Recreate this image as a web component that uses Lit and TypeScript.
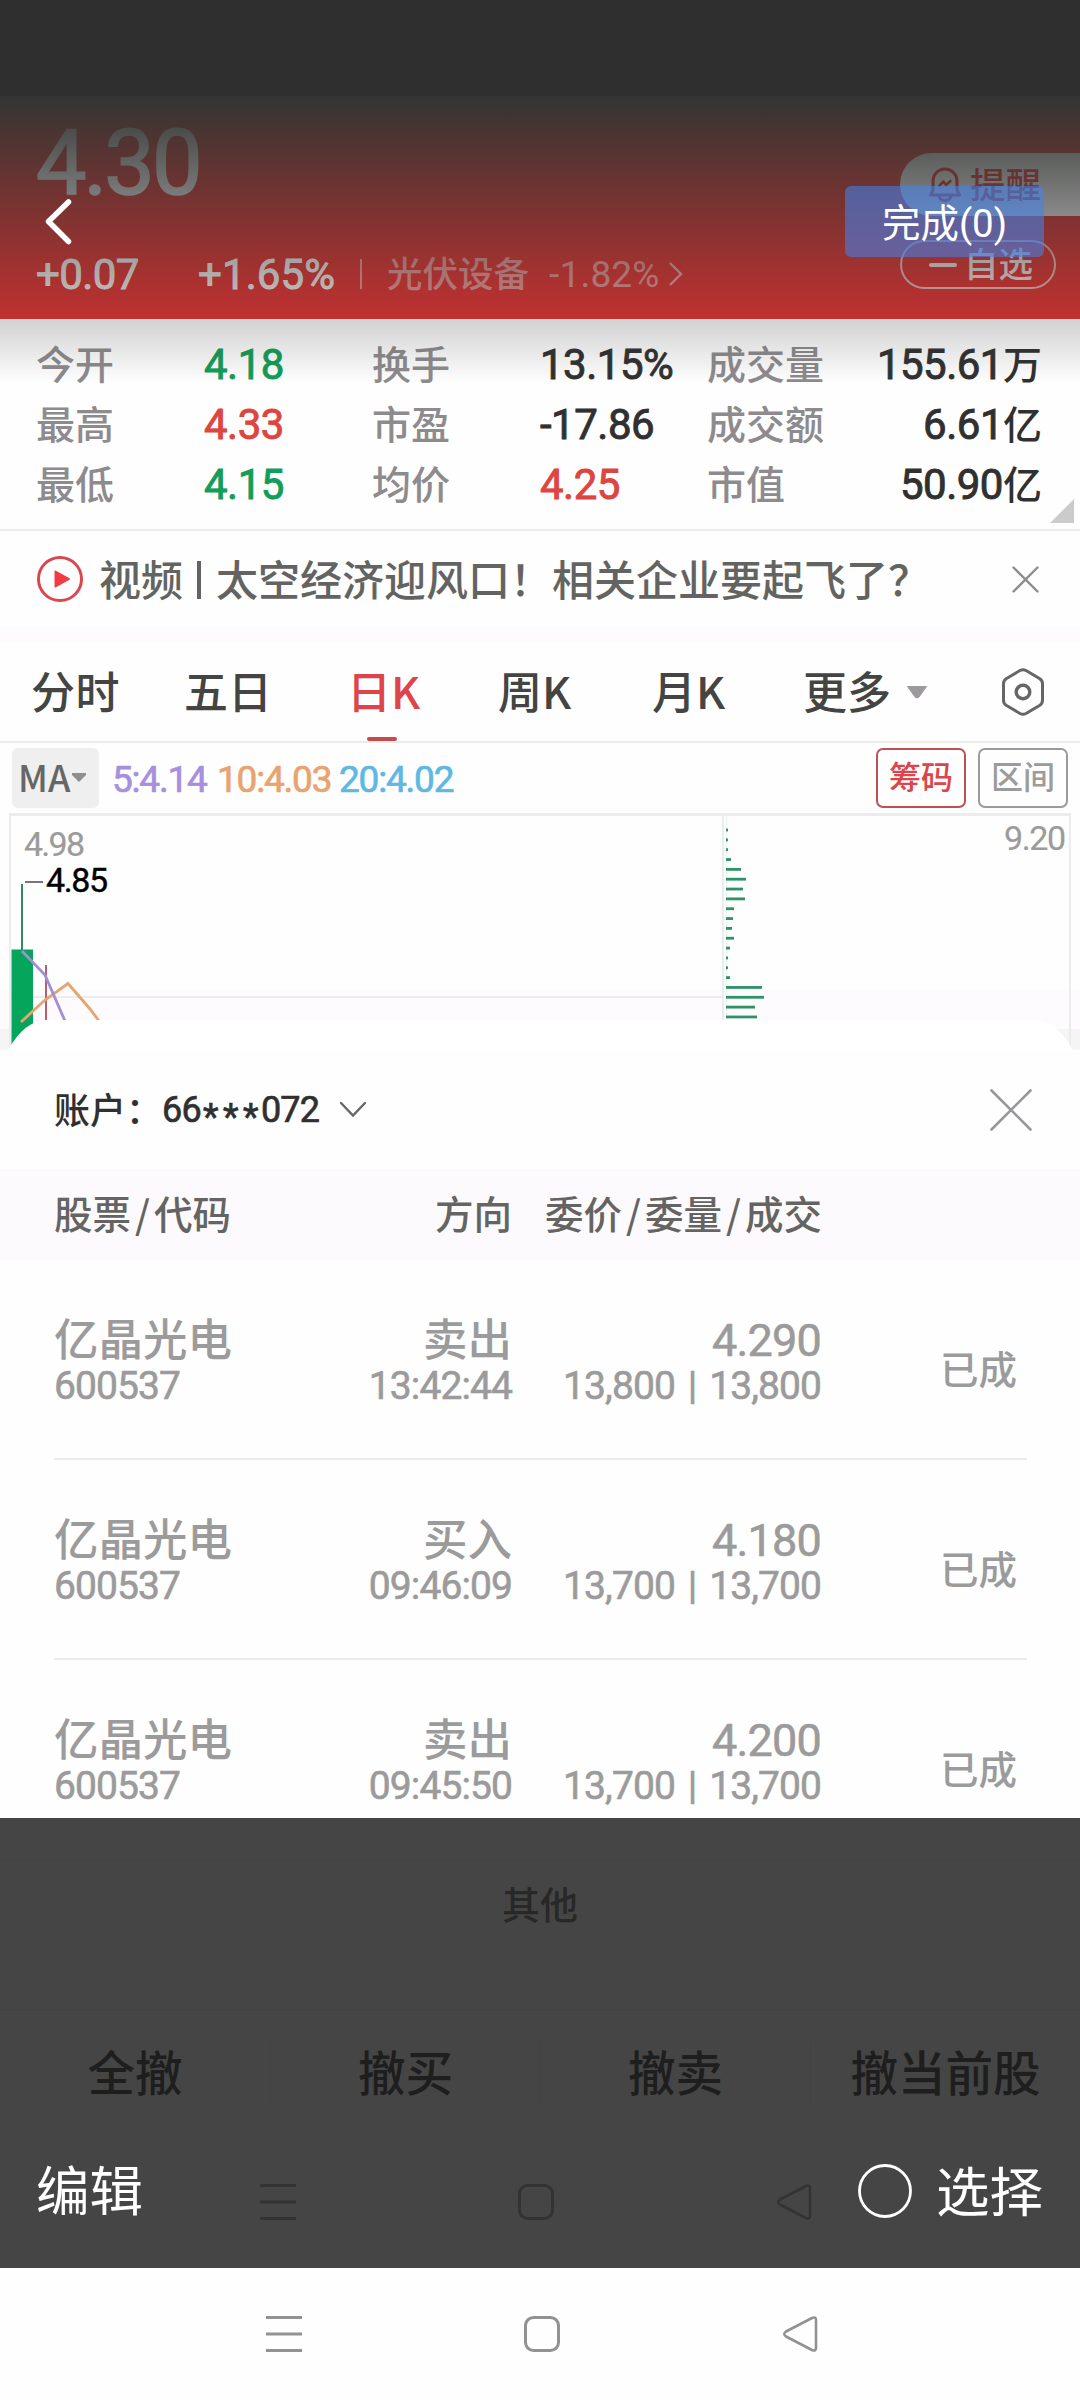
import { LitElement, html, css, svg } from "lit";
import { customElement } from "lit/decorators.js";

const quotes = [
  ["今开", "4.18", "down", "换手", "13.15%", "", "成交量", "155.61", "万"],
  ["最高", "4.33", "up", "市盈", "-17.86", "", "成交额", "6.61", "亿"],
  ["最低", "4.15", "down", "均价", "4.25", "up", "市值", "50.90", "亿"],
];

const orders = [
  ["卖出", "13:42:44", "4.290", "13,800", "13,800"],
  ["买入", "09:46:09", "4.180", "13,700", "13,700"],
  ["卖出", "09:45:50", "4.200", "13,700", "13,700"],
];

const chips = [2, 2, 2, 5, 15, 20, 17, 19, 8, 7, 6, 8, 4, 2, 2, 4, 36, 38, 29, 31];

const navIcons = (color: string) => html`
  <svg width="36" height="36" viewBox="0 0 36 36" fill="none" stroke=${color} stroke-width="3">
    <path d="M0 1.5H36M0 18H36M0 34.5H36" />
  </svg>
  <svg width="36" height="36" viewBox="0 0 36 36" fill="none" stroke=${color} stroke-width="3">
    <rect x="1.5" y="1.5" width="33" height="33" rx="8" />
  </svg>
  <svg width="36" height="36" viewBox="0 0 36 36" fill="none" stroke=${color} stroke-width="2.6" stroke-linejoin="round">
    <path d="M30 2Q34 0.5 34 4V32Q34 35.500 30 34L4 20.500Q0.500 18 4 15.500Z" />
  </svg>
`;

@customElement("quote-header")
export class QuoteHeader extends LitElement {
  static styles = css`
    :host {
      display: block;
      height: 319px;
      background: #e9302f;
      position: relative;
      font-weight: 500;
    }
    .price {
      padding: 111px 0 0 36px;
      height: 105px;
      font: 400 90px/105px Roboto, sans-serif;
      -webkit-text-stroke: 1.6px #fff;
      letter-spacing: -3px;
      color: #fff;
    }
    .line {
      display: flex;
      align-items: center;
      height: 50px;
      margin-top: 33px;
      padding-left: 36px;
      font-family: Roboto, "Noto Sans CJK SC", sans-serif;
      font-size: 42px;
      color: #fffffff2;
    }
    .chg, .pct { width: 162px; font-weight: 400; -webkit-text-stroke: 0.9px; }
    .chg { letter-spacing: -0.6px; }
    .pct { letter-spacing: 0.1px; }
    .bar { width: 2px; height: 30px; background: #ffffff80; margin-right: 25px; }
    .sector { width: 162px; font: 500 35.5px/46px "Noto Sans CJK SC", sans-serif; padding-bottom: 4px; color: #ffffff80; }
    .spct { width: 119px; font-size: 37px; color: #ffffff80; font-weight: 400; letter-spacing: 0.2px; }
    .remind {
      position: absolute;
      left: 900px;
      top: 153px;
      width: 151px;
      height: 63px;
      padding-left: 29px;
      border-radius: 32px 0 0 32px;
      background: #fff;
      color: #e9302f;
      display: flex;
      align-items: center;
      gap: 9px;
      font-size: 35.5px;
      line-height: 59px;
    }
    .remind span { padding-bottom: 4px; }
    .fav {
      position: absolute;
      left: 900px;
      top: 240px;
      width: 125px;
      height: 45px;
      padding-left: 27px;
      border: 2px solid #ffffffb0;
      border-radius: 25px;
      color: #ffffffe8;
      display: flex;
      align-items: center;
      gap: 7px;
      font-size: 34.5px;
      line-height: 41px;
    }
    .fav span { padding-bottom: 4px; }
    .minus { width: 28px; height: 4px; background: currentColor; border-radius: 2px; }
  `;
  render() {
    return html`
      <div class="price">4.30</div>
      <div class="line">
        <span class="chg">+0.07</span>
        <span class="pct">+1.65%</span>
        <i class="bar"></i>
        <span class="sector">光伏设备</span>
        <span class="spct">-1.82%</span>
        <svg width="16" height="26" viewBox="0 0 16 26" fill="none" stroke="#ffffff90" stroke-width="2.4">
          <path d="M2 2L13 13L2 24" />
        </svg>
      </div>
      <div class="remind">
        <svg width="32" height="35" viewBox="0 0 32 35" fill="none" stroke="#e9302f" stroke-width="3" stroke-linejoin="round" stroke-linecap="round">
          <path d="M4 23V14A12 12 0 0 1 28 14V23L30.500 28H1.500Z" />
          <path d="M10 29Q11 33.500 16 33.500T22 29" />
          <path d="M10.500 18.500L14.500 14.500L17 18L21.500 14" stroke-width="2.600" />
        </svg>
        <span>提醒</span>
      </div>
      <div class="fav"><i class="minus"></i><span>自选</span></div>
    `;
  }
}

@customElement("kline-chart")
export class KlineChart extends LitElement {
  static styles = css`
    :host { display: block; height: 238px; }
    svg { display: block; }
    .num { font-family: Roboto, sans-serif; font-size: 34px; font-weight: 400; }
    .grey { fill: #9b9b9b; stroke: #9b9b9b; stroke-width: 0.2px; }
    .black { fill: #000; stroke: #000; stroke-width: 0.4px; }
  `;
  render() {
    return html`
      <svg width="1080" height="238" viewBox="0 812 1080 238">
        <rect x="0" y="989" width="1080" height="61" fill="#fefbfe" />
        <path d="M0 1029H30V1050H0ZM1050 1029H1080V1050H1050Z" fill="#f5f5f5" />
        <g stroke="#ececec" fill="none">
          <path d="M9 814.500H1071" stroke-width="3" />
          <path d="M10 815V1050M1070 815V1050M11 997H723M723 815V1030" stroke-width="2" />
          <path d="M726.500 815V1020" stroke="#e4f3ec" stroke-width="1" />
        </g>
        <text class="num grey" x="24" y="856" textLength="61">4.98</text>
        <text class="num grey" x="1004" y="850" textLength="62">9.20</text>
        <path d="M25 882H43" stroke="#777" stroke-width="2" />
        <text class="num black" x="46" y="892" textLength="62">4.85</text>
        <path d="M22 884V950" stroke="#2f8b62" stroke-width="2" />
        <rect x="11.500" y="949.500" width="21.500" height="100" fill="#05a65b" />
        <path d="M46 965V1021" stroke="#b04f5a" stroke-width="1.800" />
        <path d="M21 1022L45 1000L68 983.500L90 1009L99 1021" fill="none" stroke="#e5a571" stroke-width="2.800" />
        <path d="M22 951L45 975L65 1021" fill="none" stroke="#a28ed3" stroke-width="2.800" />
        ${chips.map((w, i) => svg`<rect x="726" y=${828.6 + i * 9.84} width=${w} height="2.800" fill="#2f9265" />`)}
        <path d="M0 1050H8Q25 1020 47 1020H1034Q1056 1020 1073 1050H1080V1051H0Z" fill="#fff" />
      </svg>
    `;
  }
}

@customElement("order-row")
export class OrderRow extends LitElement {
  static properties = { data: { attribute: false } };
  declare data: string[];
  static styles = css`
    :host {
      display: grid;
      grid-template-columns: 257px 201px 309px 1fr;
      height: 198px;
      margin: 0 53px 0 54px;
      border-bottom: 2px solid #ececec;
      color: #9b9b9b;
      font-weight: 500;
    }
    .col { padding-top: 56px; font-family: Roboto, "Noto Sans CJK SC", sans-serif; }
    .r { text-align: right; }
    .big { font-size: 44.5px; line-height: 50px; height: 50px; }
    .num { font-weight: 400; white-space: nowrap; -webkit-text-stroke: 0.6px; }
    .big.num { font-size: 45px; letter-spacing: -0.8px; }
    .small { font-size: 39px; line-height: 40px; letter-spacing: -0.9px; }
    .qty { word-spacing: 4px; }
    .state { font-size: 38.5px; line-height: 40px; text-align: right; padding: 87px 10px 0 0; }
  `;
  render() {
    const [side, time, price, qty, done] = this.data;
    return html`
      <div class="col"><div class="big">亿晶光电</div><div class="small num">600537</div></div>
      <div class="col r"><div class="big">${side}</div><div class="small num">${time}</div></div>
      <div class="col r"><div class="big num">${price}</div><div class="small num qty">${qty} | ${done}</div></div>
      <div class="state">已成</div>
    `;
  }
}

@customElement("app-root")
export class AppRoot extends LitElement {
  static styles = css`
    :host {
      display: block;
      position: relative;
      width: 1080px;
      height: 2400px;
      overflow: hidden;
      background: #fefefe;
      font-family: "Noto Sans CJK SC", sans-serif;
      font-weight: 500;
      color: #303030;
    }
    .num { font-family: Roboto, "Noto Sans CJK SC", sans-serif; }
    .quotes {
      display: grid;
      grid-template-columns: 168px 168px 168px 167px 136px 1fr;
      grid-template-rows: repeat(3, 60px);
      height: 212px;
      box-sizing: border-box;
      border-bottom: 2px solid #ececec;
      padding: 16px 38px 0 36px;
      line-height: 60px;
      font-size: 39px;
      position: relative;
      white-space: nowrap;
    }
    .label { color: #8d8b8d; line-height: 54px; }
    .quotes .num { font-size: 42px; letter-spacing: -0.5px; font-weight: 400; -webkit-text-stroke: 0.9px; }
    .right { text-align: right; }
    .quotes .unit { font-weight: 500; font-size: 39px; letter-spacing: 0; -webkit-text-stroke: 0; }
    .up { color: #dd4540; }
    .down { color: #119d5a; }
    .more {
      position: absolute;
      left: 1050px;
      top: 180px;
      border-left: 24px solid transparent;
      border-bottom: 24px solid #cbcbcb;
    }
    .news {
      display: flex;
      align-items: center;
      height: 96px;
      padding: 0 41px 0 37px;
      color: #636461;
      font-size: 42px;
      line-height: 58px;
    }
    .news svg { flex: none; }
    .tag { margin-left: 16px; padding-bottom: 3px; }
    .pipe { width: 4px; height: 38px; background: #636461; margin: 2px 15px 0 14px; }
    .headline { flex: 1; white-space: nowrap; padding-bottom: 3px; }
    .band { height: 15px; background: #fefafe; }
    .tabs {
      display: flex;
      align-items: center;
      height: 99px;
      border-bottom: 2px solid #ececec;
      font-size: 44px;
      line-height: 60px;
      color: #444543;
      padding-left: 31px;
    }
    .tab { position: relative; white-space: nowrap; flex: none; padding-bottom: 4px; }
    .t1 { width: 153px; letter-spacing: 0.5px; }
    .t2 { width: 163px; }
    .t3 { width: 151px; color: #e0444b; }
    .t4 { width: 154px; }
    .t5 { width: 151px; }
    .t6 { width: 103px; }
    .t3::after {
      content: "";
      position: absolute;
      left: 20px;
      top: 77px;
      width: 30px;
      height: 4px;
      border-radius: 2px;
      background: #c84850;
    }
    .hex { margin-left: 74px; }
    .ma {
      display: flex;
      align-items: center;
      height: 69px;
      padding: 0 12px;
      font-size: 38px;
    }
    .mabox {
      width: 81px;
      height: 60px;
      padding-left: 6px;
      border-radius: 6px;
      background: #efefef;
      color: #666;
      display: flex;
      align-items: center;
      gap: 2px;
      font-size: 36px;
      line-height: 50px;
      margin-right: 13px;
    }
    .mabox span { padding-bottom: 4px; }
    .mv { font-size: 37px; letter-spacing: -1.200px; font-weight: 400; padding-top: 4px; -webkit-text-stroke: 0.7px; }
    .m1 { color: #a78fdf; width: 105px; }
    .m2 { color: #e9a36e; width: 122px; }
    .m3 { color: #5fb8e4; flex: 1; }
    .btn {
      width: 86px;
      height: 56px;
      border: 2px solid #9b9b9b;
      border-radius: 7px;
      color: #9b9b9b;
      text-align: center;
      font-size: 32px;
      line-height: 50px;
      margin-left: 12px;
    }
    .btn.on { color: #db454b; border-color: #c05058; }
    .account {
      display: flex;
      align-items: center;
      height: 119px;
      padding: 0 48px 0 54px;
      font-size: 36px;
      background: #fefefe;
    }
    .who { padding-bottom: 3px; }
    .accno { font-size: 36px; letter-spacing: -0.800px; white-space: nowrap; font-weight: 400; -webkit-text-stroke: 0.7px; }
    .star { position: relative; top: 7px; letter-spacing: 4.500px; left: 2px; }
    .chev { margin-left: 20px; }
    .grow { flex: 1; }
    .thead {
      display: grid;
      grid-template-columns: 257px 201px 310px 1fr;
      height: 91px;
      padding: 0 54px;
      background: #fdfafd;
      color: #646562;
      font-size: 38.500px;
      line-height: 87px;
      white-space: nowrap;
    }
    .sl { padding: 0 4px; }
    .list { height: 558px; overflow: hidden; }
    .bottom {
      height: 450px;
      background: #454545;
      color: #1e1e1e;
      position: relative;
      display: flex;
      flex-direction: column;
    }
    .other {
      height: 149px;
      margin-top: 41px;
      border-top: 1px solid #434343;
      text-align: center;
      color: #282828;
      font-size: 38px;
      line-height: 86px;
    }
    .acts {
      display: grid;
      grid-template-columns: repeat(4, 270px);
      border-top: 1px solid #424242;
      padding-top: 32px;
      height: 62px;
      line-height: 58px;
      font-size: 47.500px;
      text-align: center;
      white-space: nowrap;
    }
    .acts span + span { border-left: 1px solid #424242; }
    .ghost { display: flex; gap: 222px; padding: 80px 0 0 260px; }
    .edit {
      position: absolute;
      left: 0;
      right: 0;
      top: 333px;
      height: 80px;
      padding: 0 37px 0 36px;
      display: flex;
      align-items: center;
      color: #fff;
      font-size: 53.500px;
      font-weight: 400;
      line-height: 74px;
    }
    .edit span { padding-bottom: 7px; }
    .edit .choose { margin-left: 24px; padding-bottom: 5px; }
    .nav { display: flex; gap: 222px; height: 132px; padding: 48px 0 0 266px; box-sizing: border-box; background: #fefefe; }
    .status { position: absolute; left: 0; top: 0; width: 1080px; height: 96px; background: #2f2f2f; }
    .shade {
      position: absolute;
      left: 0;
      top: 96px;
      width: 1080px;
      height: 287px;
      background: linear-gradient(#333533, #35353500);
    }
    .back { position: absolute; left: 43px; top: 197px; }
    .done {
      position: absolute;
      left: 845px;
      top: 186px;
      width: 199px;
      height: 71px;
      border-radius: 6px;
      background: rgba(66, 131, 235, 0.57);
      color: #fff;
      font: 400 38.500px/75px Roboto, "Noto Sans CJK SC", sans-serif;
      text-align: center;
    }
  `;
  render() {
    const slash = html`<span class="sl">/</span>`;
    return html`
      <quote-header></quote-header>
      <div class="quotes">
        ${quotes.map(
          (q) => html`
            <span class="label">${q[0]}</span><span class="num ${q[2]}">${q[1]}</span>
            <span class="label">${q[3]}</span><span class="num ${q[5]}">${q[4]}</span>
            <span class="label">${q[6]}</span><span class="num right">${q[7]}<span class="unit">${q[8]}</span></span>
          `
        )}
        <i class="more"></i>
      </div>
      <div class="news">
        <svg width="46" height="46" viewBox="0 0 46 46">
          <circle cx="23" cy="23" r="21.500" fill="none" stroke="#d9474f" stroke-width="3" />
          <path d="M18.500 15.500L32 23L18.500 30.500Z" fill="#f23c44" stroke="#f23c44" stroke-linejoin="round" stroke-width="2" />
        </svg>
        <span class="tag">视频</span><i class="pipe"></i>
        <span class="headline">太空经济迎风口！相关企业要起飞了？</span>
        <svg width="27" height="27" viewBox="0 0 27 27" stroke="#8e8c90" stroke-width="2.400" stroke-linecap="round">
          <path d="M1.500 1.500L25.500 25.500M25.500 1.500L1.500 25.500" />
        </svg>
      </div>
      <div class="band"></div>
      <div class="tabs">
        <span class="tab t1">分时</span><span class="tab t2">五日</span><span class="tab t3">日K</span>
        <span class="tab t4">周K</span><span class="tab t5">月K</span><span class="tab t6">更多</span>
        <svg width="22" height="14" viewBox="0 0 22 14"><path d="M1.500 1.500H20.500L13 12Q11 14 9 12Z" fill="#9c9a9d" stroke="#9c9a9d" stroke-linejoin="round" /></svg>
        <svg class="hex" width="42" height="48" viewBox="0 0 42 48" fill="none" stroke="#666" stroke-width="3" stroke-linejoin="round">
          <path d="M18 2.500Q21 1 24 2.500L37.500 10.500Q40.500 12.500 40.500 15.500V32.500Q40.500 35.500 37.500 37.500L24 45.500Q21 47 18 45.500L4.500 37.500Q1.500 35.500 1.500 32.500V15.500Q1.500 12.500 4.500 10.500Z" />
          <circle cx="21" cy="24" r="6.800" stroke-width="3.400" />
        </svg>
      </div>
      <div class="ma">
        <div class="mabox"><span>MA</span><svg width="14" height="9" viewBox="0 0 14 9"><path d="M0 0H14V2L7 9L0 2Z" fill="#8e8e8e" /></svg></div>
        <span class="num mv m1">5:4.14</span><span class="num mv m2">10:4.03</span><span class="num mv m3">20:4.02</span>
        <span class="btn on">筹码</span><span class="btn">区间</span>
      </div>
      <kline-chart></kline-chart>
      <div class="account">
        <span class="who">账户：</span><span class="num accno">66<span class="star">***</span>072</span>
        <svg class="chev" width="28" height="17" viewBox="0 0 28 17" fill="none" stroke="#666" stroke-width="2.400" stroke-linecap="round">
          <path d="M2 2L14 14.500L26 2" />
        </svg>
        <i class="grow"></i>
        <svg width="42" height="42" viewBox="0 0 42 42" stroke="#98969a" stroke-width="2.600" stroke-linecap="round">
          <path d="M1.500 1.500L40.500 40.500M40.500 1.500L1.500 40.500" />
        </svg>
      </div>
      <div class="thead">
        <span>股票${slash}代码</span><span class="right">方向</span><span class="right">委价${slash}委量${slash}成交</span><span></span>
      </div>
      <div class="list">${orders.map((o) => html`<order-row .data=${o}></order-row>`)}</div>
      <div class="bottom">
        <div class="other">其他</div>
        <div class="acts"><span>全撤</span><span>撤买</span><span>撤卖</span><span>撤当前股</span></div>
        <div class="ghost">${navIcons("#333")}</div>
        <div class="edit">
          <span>编辑</span><i class="grow"></i>
          <svg width="54" height="54" viewBox="0 0 54 54"><circle cx="27" cy="27" r="25.500" fill="none" stroke="#fff" stroke-width="2.800" /></svg>
          <span class="choose">选择</span>
        </div>
      </div>
      <div class="nav">${navIcons("#929292")}</div>
      <div class="status"></div>
      <div class="shade"></div>
      <svg class="back" width="30" height="50" viewBox="0 0 30 50" fill="none" stroke="#fff" stroke-width="5.500" stroke-linecap="round" stroke-linejoin="round">
        <path d="M25.500 5L5.500 24.500L25.500 44.500" />
      </svg>
      <div class="done">完成(0)</div>
    `;
  }
}
